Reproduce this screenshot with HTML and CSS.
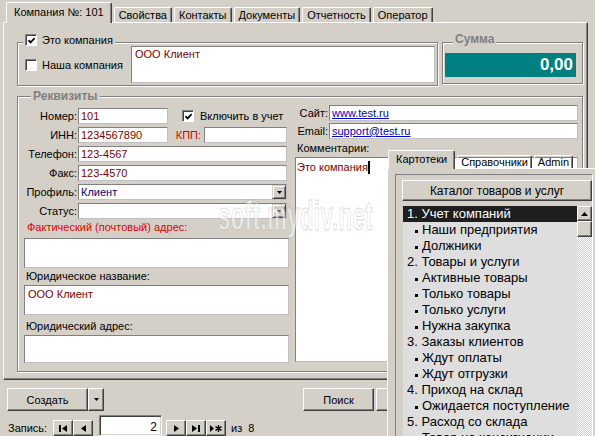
FILE: index.html
```
<!DOCTYPE html>
<html lang="ru">
<head>
    <meta charset="UTF-8">
    <title>Компания №: 101</title>
    <link rel="stylesheet" href="styles.css">
</head>
<body>
    <div class="tabs">
        <div class="tab active">Компания №: 101</div>
        <div class="tab">Свойства</div>
        <div class="tab">Контакты</div>
        <div class="tab">Документы</div>
        <div class="tab">Отчетность</div>
        <div class="tab">Оператор</div>
    </div>

    <div class="page">
        <div class="top-row">
            <div class="group company">
                <div class="legend check-legend">
                    <span class="check"><svg width="7" height="7" viewBox="0 0 7 7"><path d="M0.5 3.2 L2.6 5.4 L6.6 1.2" fill="none" stroke="#000" stroke-width="1.7"/></svg></span>Это компания
                </div>
                <div class="checkline"><span class="check"></span>Наша компания</div>
                <div class="field memo dark">ООО Клиент</div>
            </div>
            <div class="group sum">
                <div class="legend title sum-title">Сумма</div>
                <div class="amount">0,00</div>
            </div>
        </div>

        <div class="group rekv">
            <div class="legend title rekv-title">Реквизиты</div>
            <div class="col-left">
                <div class="form-grid">
                    <span class="lbl">Номер:</span>
                    <div class="row">
                        <div class="field short dark">101</div>
                        <div class="checkline include"><span class="check"><svg width="7" height="7" viewBox="0 0 7 7"><path d="M0.5 3.2 L2.6 5.4 L6.6 1.2" fill="none" stroke="#000" stroke-width="1.7"/></svg></span>Включить в учет</div>
                    </div>
                    <span class="lbl">ИНН:</span>
                    <div class="row">
                        <div class="field short dark">1234567890</div>
                        <span class="lbl red kpp">КПП:</span>
                        <div class="field grow"></div>
                    </div>
                    <span class="lbl">Телефон:</span>
                    <div class="field dark">123-4567</div>
                    <span class="lbl">Факс:</span>
                    <div class="field dark">123-4570</div>
                    <span class="lbl">Профиль:</span>
                    <div class="field combo blue">Клиент<span class="drop"><svg width="5" height="3" viewBox="0 0 5 3"><path d="M0 0h5L2.5 3z"/></svg></span></div>
                    <span class="lbl">Статус:</span>
                    <div class="field combo"><span></span><span class="drop"><svg width="5" height="3" viewBox="0 0 5 3"><path d="M0 0h5L2.5 3z"/></svg></span></div>
                </div>
                <div class="cap red cap-1">Фактический (почтовый) адрес:</div>
                <div class="field box box-1"></div>
                <div class="cap cap-2">Юридическое название:</div>
                <div class="field box dark">ООО Клиент</div>
                <div class="cap cap-3">Юридический адрес:</div>
                <div class="field box box-3"></div>
            </div>
            <div class="col-right">
                <div class="form-grid">
                    <span class="lbl">Сайт:</span>
                    <div class="field"><span class="link">www.test.ru</span></div>
                    <span class="lbl">Email:</span>
                    <div class="field"><span class="link">support@test.ru</span></div>
                </div>
                <div class="cap comments-cap">Комментарии:</div>
                <div class="field comments dark">Это компания<span class="caret"></span></div>
            </div>
        </div>
    </div>

    <div class="footer">
        <div class="actions">
            <div class="btn create">Создать</div>
            <div class="btn create-drop"><svg width="5" height="3" viewBox="0 0 5 3"><path d="M0 0h5L2.5 3z"/></svg></div>
            <div class="btn search">Поиск</div>
            <div class="btn more"></div>
        </div>
        <div class="nav">
            <span class="nav-label">Запись:</span>
            <div class="btn nav-btn"><svg width="8" height="7" viewBox="0 0 8 7"><rect width="2" height="7"/><path d="M8 0v7L3 3.5z"/></svg></div>
            <div class="btn nav-btn"><svg width="5" height="7" viewBox="0 0 5 7"><path d="M5 0v7L0 3.5z"/></svg></div>
            <div class="nav-input">2</div>
            <div class="btn nav-btn next"><svg width="5" height="7" viewBox="0 0 5 7"><path d="M0 0v7L5 3.5z"/></svg></div>
            <div class="btn nav-btn"><svg width="8" height="7" viewBox="0 0 8 7"><path d="M0 0v7L5 3.5z"/><rect x="6" width="2" height="7"/></svg></div>
            <div class="btn nav-btn"><svg width="12" height="7" viewBox="0 0 12 7"><path d="M0 0v7L4 3.5z"/><path d="M8.5 0v7M5.5 1.7l6 3.6M5.5 5.3l6-3.6" stroke="#000" stroke-width="1.4"/></svg></div>
            <span class="nav-count">из&nbsp; 8</span>
        </div>
    </div>

    <div class="watermark">soft.mydiv.net</div>

    <div class="catalog">
        <div class="ftabs">
            <div class="tab ftab active">Картотеки</div>
            <div class="tab ftab">Справочники</div>
            <div class="tab ftab">Admin</div>
        </div>
        <div class="fbody">
            <div class="frame">
                <div class="btn catalog-btn">Каталог товаров и услуг</div>
                <div class="list">
                    <div class="items">
                        <div class="item sel">1. Учет компаний</div>
                        <div class="item sub"><i></i>Наши предприятия</div>
                        <div class="item sub"><i></i>Должники</div>
                        <div class="item">2. Товары и услуги</div>
                        <div class="item sub"><i></i>Активные товары</div>
                        <div class="item sub"><i></i>Только товары</div>
                        <div class="item sub"><i></i>Только услуги</div>
                        <div class="item sub"><i></i>Нужна закупка</div>
                        <div class="item">3. Заказы клиентов</div>
                        <div class="item sub"><i></i>Ждут оплаты</div>
                        <div class="item sub"><i></i>Ждут отгрузки</div>
                        <div class="item">4. Приход на склад</div>
                        <div class="item sub"><i></i>Ожидается поступление</div>
                        <div class="item">5. Расход со склада</div>
                        <div class="item sub"><i></i>Товар на консигнации</div>
                    </div>
                    <div class="scroll">
                        <div class="btn sb-up"><svg width="7" height="4" viewBox="0 0 7 4"><path d="M3.5 0L7 4H0z"/></svg></div>
                        <div class="btn sb-thumb"></div>
                    </div>
                </div>
            </div>
        </div>
    </div>
</body>
</html>
```

FILE: styles.css
```
* {
    box-sizing: border-box;
}
body {
    margin: 0;
    width: 595px;
    height: 436px;
    overflow: hidden;
    position: relative;
    background-color: #d4d0c8;
    font-family: "Liberation Sans", Arial, sans-serif;
    font-size: 11px;
    color: #000;
}
svg {
    display: block;
    fill: #000;
}

/* tabs */
.tabs {
    display: flex;
    align-items: flex-end;
    gap: 2px;
    height: 22px;
    padding-left: 6px;
}
.tab {
    height: 15px;
    padding: 0 4px;
    line-height: 14px;
    border: 1px solid;
    border-bottom: none;
    border-color: #fff #404040 #404040 #fff;
    box-shadow: inset -1px 0 #808080;
    border-radius: 2px 2px 0 0;
    white-space: nowrap;
}
.tab.active {
    position: relative;
    z-index: 1;
    height: 21px;
    margin-bottom: -1px;
    padding: 0 7px;
    line-height: 18px;
    background-color: #d4d0c8;
}
.page {
    width: 585px;
    height: 358px;
    margin-left: 3px;
    border: 1px solid;
    border-color: #fff #404040 #404040 #fff;
    box-shadow: inset -1px -1px #808080;
    padding: 19px 3px 0 13px;
}

/* group boxes */
.group {
    position: relative;
    border: 1px solid #808080;
    box-shadow: inset 1px 1px #fff, 1px 1px #fff;
}
.legend {
    position: absolute;
    background-color: #d4d0c8;
    padding: 0 2px;
    line-height: 12px;
    white-space: nowrap;
}
.legend.title {
    font-size: 12px;
    font-weight: bold;
    color: #808080;
    line-height: 14px;
}
.check-legend {
    top: -9px;
    left: 5px;
    display: flex;
    align-items: center;
    gap: 5px;
}
.sum-title { top: -11px; left: 10px; }
.rekv-title { top: -8px; left: 13px; }

.check {
    width: 12px;
    height: 12px;
    flex-shrink: 0;
    display: flex;
    align-items: center;
    justify-content: center;
    background-color: #fff;
    border: 1px solid;
    border-color: #808080 #fff #fff #808080;
    box-shadow: inset 1px 1px #404040;
}
.checkline {
    display: flex;
    align-items: center;
    gap: 5px;
    white-space: nowrap;
}

/* fields */
.field {
    background-color: #fff;
    border: 1px solid;
    border-color: #808080 #c0c0c0 #c0c0c0 #808080;
    height: 16px;
    line-height: 14px;
    padding: 0 2px;
    white-space: nowrap;
    overflow: hidden;
}
.dark { color: #800000; }
.blue { color: #000080; }
.red { color: #e00000; }
.link {
    color: #0000c0;
    text-decoration: underline;
}

.top-row {
    display: flex;
    align-items: flex-start;
    gap: 4px;
}
.company {
    width: 421px;
    height: 44px;
    display: flex;
    align-items: center;
    padding: 3px 2px 2px 7px;
}
.company .checkline {
    width: 106px;
}
.memo {
    flex: 1;
    height: 37px;
    padding: 0 3px;
}
.sum {
    width: 141px;
    height: 42px;
    padding: 10px 6px 0 2px;
}
.amount {
    height: 24px;
    background-color: #008080;
    color: #fff;
    font-size: 17px;
    font-weight: bold;
    line-height: 24px;
    text-align: right;
    padding-right: 3px;
}

.rekv {
    margin-top: 10px;
    width: 566px;
    height: 276px;
    display: flex;
    gap: 6px;
    padding: 8px 4px 0 6px;
}
.col-left {
    width: 265px;
    margin-top: 3px;
    display: flex;
    flex-direction: column;
}
.col-right {
    flex: 1;
    display: flex;
    flex-direction: column;
}
.form-grid {
    display: grid;
    grid-template-columns: 53px 1fr;
    grid-auto-rows: 16px;
    column-gap: 1px;
    row-gap: 3px;
    padding-right: 2px;
}
.col-right .form-grid {
    grid-template-columns: 33px 1fr;
    row-gap: 2px;
    padding-right: 0;
}
.lbl {
    text-align: right;
    line-height: 16px;
    white-space: nowrap;
}
.row {
    display: flex;
    align-items: center;
}
.short { width: 90px; }
.include {
    margin-left: 14px;
    gap: 6px;
}
.kpp {
    width: 36px;
    padding-right: 3px;
}
.grow { flex: 1; }
.combo {
    display: flex;
    justify-content: space-between;
    padding-right: 0;
}
.drop {
    width: 14px;
    height: 14px;
    display: flex;
    align-items: center;
    justify-content: center;
    background-color: #d4d0c8;
    border: 1px solid;
    border-color: #d4d0c8 #404040 #404040 #d4d0c8;
    box-shadow: inset 1px 1px #fff, inset -1px -1px #808080;
}

.cap {
    line-height: 12px;
    padding-left: 2px;
    white-space: nowrap;
}
.cap-1 { margin-top: 2px; padding-left: 3px; }
.cap-2 { margin-top: 2px; }
.cap-3 { margin-top: 5px; }
.box {
    height: 30px;
    margin-top: 3px;
    line-height: 16px;
    padding: 0 3px;
}
.box-1 { margin-top: 5px; }
.box-3 { height: 28px; }
.comments-cap { margin-top: 3px; }
.comments {
    height: 205px;
    margin-top: 3px;
    padding: 2px 1px;
}
.caret {
    display: inline-block;
    width: 2px;
    height: 13px;
    background-color: #000;
    vertical-align: -3px;
}

/* footer */
.footer {
    padding: 8px 0 0 7px;
}
.actions {
    display: flex;
    height: 23px;
}
.btn {
    display: flex;
    align-items: center;
    justify-content: center;
    background-color: #d4d0c8;
    border: 1px solid;
    border-color: #fff #404040 #404040 #fff;
    box-shadow: inset -1px -1px #808080;
    white-space: nowrap;
}
.create { width: 81px; }
.create-drop { width: 16px; }
.search {
    width: 71px;
    margin-left: 199px;
}
.more {
    width: 70px;
    margin-left: 2px;
}
.nav {
    display: flex;
    align-items: flex-end;
    height: 21px;
    margin-top: 4px;
}
.nav-label {
    width: 46px;
    padding-left: 1px;
    line-height: 16px;
}
.nav-btn {
    width: 20px;
    height: 16px;
}
.nav-input {
    width: 63px;
    height: 21px;
    margin: 0 4px 0 6px;
    background-color: #fff;
    border: 1px solid;
    border-color: #808080 #fff #fff #808080;
    box-shadow: inset 1px 1px #404040, inset -1px -1px #d4d0c8;
    text-align: right;
    font-size: 12px;
    line-height: 22px;
    padding-right: 4px;
}
.nav-count {
    margin-left: 5px;
    line-height: 16px;
}

/* watermark */
.watermark {
    position: absolute;
    left: 218px;
    top: 196px;
    z-index: 2;
    font-size: 40px;
    line-height: 40px;
    font-weight: bold;
    letter-spacing: 1px;
    color: rgba(255, 255, 255, 0.55);
    -webkit-text-stroke: 1px rgba(140, 140, 140, 0.35);
    transform: scaleX(0.55);
    transform-origin: 0 0;
    white-space: nowrap;
}

/* floating catalog panel */
.catalog {
    position: absolute;
    left: 387px;
    top: 150px;
    z-index: 3;
    width: 210px;
    height: 290px;
}
.ftabs {
    display: flex;
    align-items: flex-end;
    gap: 2px;
    height: 18px;
    padding-left: 1px;
}
.ftab {
    height: 13px;
    line-height: 12px;
    padding: 0 3px;
}
.ftab.active {
    height: 19px;
    line-height: 17px;
}
.fbody {
    height: 272px;
    background-color: #d4d0c8;
    border-top: 1px solid #fff;
    border-left: 1px solid #fff;
    padding: 5px 0 0 7px;
}
.frame {
    width: 198px;
    height: 272px;
    border: 1px solid;
    border-color: #808080 #fff #fff #808080;
    padding: 5px 0 0 6px;
}
.catalog-btn {
    width: 190px;
    height: 21px;
    font-size: 12px;
}
.list {
    display: flex;
    height: 240px;
    margin: 5px 0 0 1px;
}
.items {
    width: 174px;
    background-color: #dedede;
    font-size: 13px;
}
.item {
    height: 16px;
    line-height: 16px;
    padding-left: 4px;
    white-space: nowrap;
}
.item.sub {
    display: flex;
    align-items: center;
    padding-left: 12px;
}
.item.sub i {
    width: 3px;
    height: 3px;
    margin: 2px 4px 0 0;
    background-color: #000;
}
.item.sel {
    background-color: #1e1e1e;
    color: #fff;
}
.scroll {
    width: 15px;
    background: repeating-conic-gradient(#fff 0 25%, #d4d0c8 0 50%) 0 0 / 2px 2px;
}
.sb-up { height: 15px; }
.sb-thumb { height: 16px; }
```
